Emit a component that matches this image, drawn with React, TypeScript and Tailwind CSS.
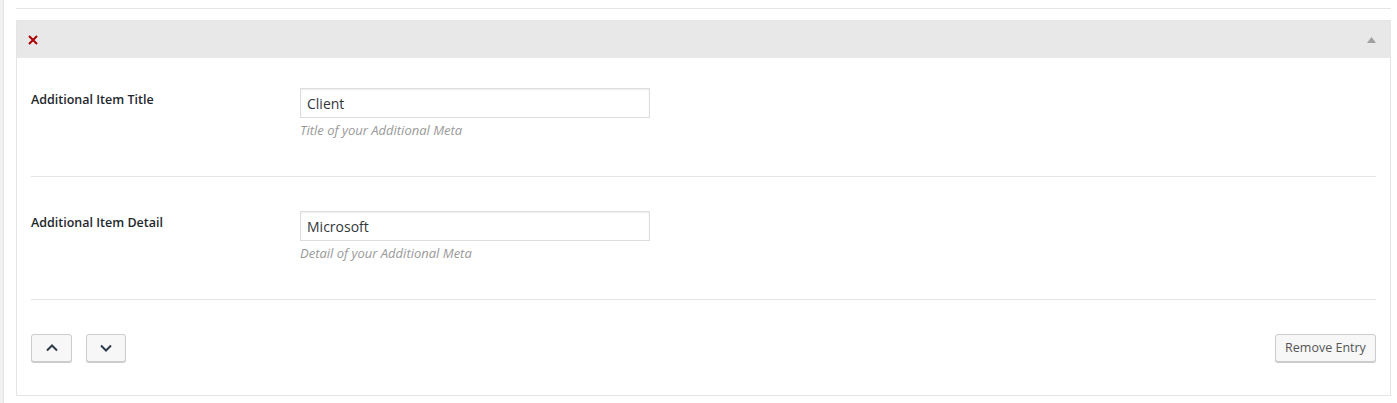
import React from 'react';

const fields = [
  { label: 'Additional Item Title', value: 'Client', help: 'Title of your Additional Meta', pt: 'pt-[30px]', pb: 'pb-[37px]' },
  { label: 'Additional Item Detail', value: 'Microsoft', help: 'Detail of your Additional Meta', pt: 'pt-[34px]', pb: 'pb-[37px]' },
];

const App = () => {
  return (
    <div className="flex min-h-[403px] w-full bg-white font-['Open_Sans','Noto_Sans',sans-serif] text-[13px] text-[#23282d]">
      {/* admin menu edge */}
      <div className="w-[4px] shrink-0 border-r border-[#e5e5e5] bg-[#f1f1f1]"></div>

      <div className="flex-1 pl-[12px] pr-[6px] pt-[8px]">
        <div className="h-px bg-[#e5e5e5]"></div>

        {/* repeater entry */}
        <div className="mt-[11px] border border-[#e5e5e5] bg-white">
          <div className="flex h-[37px] items-center justify-between bg-[#e8e8e8] pl-[11px] pr-[14px]">
            <svg width="10" height="10" viewBox="0 0 10 10">
              <path d="M1 1L9 9M9 1L1 9" stroke="#a00" strokeWidth="2" />
            </svg>
            <svg width="9" height="6" viewBox="0 0 9 6">
              <path d="M4.5 0L9 6H0Z" fill="#a0a0a0" />
            </svg>
          </div>

          <div className="px-[14px]">
            {fields.map((f) => (
              <div key={f.label} className={`flex border-b border-[#e5e5e5] ${f.pt} ${f.pb}`}>
                <div className="w-[269px] shrink-0 pt-[3px] text-[12.5px] font-semibold leading-[18px]">{f.label}</div>
                <div>
                  <input
                    readOnly
                    value={f.value}
                    className="block h-[30px] w-[350px] border border-[#ddd] bg-white px-[6px] text-[14px] text-[#32373c] shadow-[inset_0_1px_2px_rgba(0,0,0,0.07)] outline-none"
                  />
                  <p className="mt-[3px] text-[13px] italic leading-[18px] text-[#999]">{f.help}</p>
                </div>
              </div>
            ))}

            <div className="flex items-center justify-between pb-[33px] pt-[34px]">
              <div className="flex gap-[14px]">
                <button className="flex h-[28px] w-[41px] items-center justify-center rounded-[3px] border border-[#ccc] bg-[#f7f7f7] shadow-[0_1px_0_#ccc]">
                  <svg width="12" height="8" viewBox="0 0 12 8">
                    <path d="M1 6.5L6 1.5L11 6.5" fill="none" stroke="#2c3a4a" strokeWidth="2" />
                  </svg>
                </button>
                <button className="flex h-[28px] w-[40px] items-center justify-center rounded-[3px] border border-[#ccc] bg-[#f7f7f7] shadow-[0_1px_0_#ccc]">
                  <svg width="12" height="8" viewBox="0 0 12 8">
                    <path d="M1 1.5L6 6.5L11 1.5" fill="none" stroke="#2c3a4a" strokeWidth="2" />
                  </svg>
                </button>
              </div>
              <button className="h-[28px] w-[101px] rounded-[3px] border border-[#ccc] bg-[#f7f7f7] text-[12.5px] text-[#555] shadow-[0_1px_0_#ccc]">
                Remove Entry
              </button>
            </div>
          </div>
        </div>
      </div>
    </div>
  );
};

export default App;
